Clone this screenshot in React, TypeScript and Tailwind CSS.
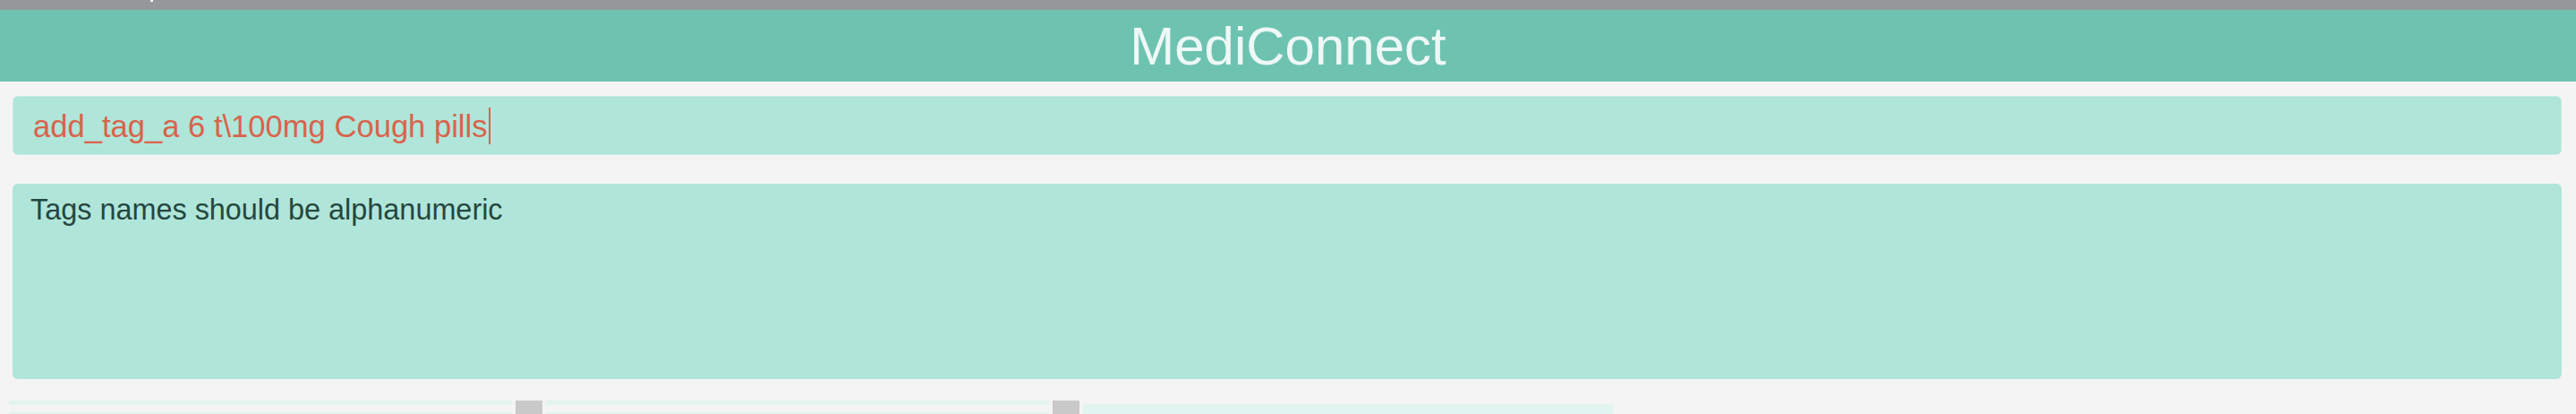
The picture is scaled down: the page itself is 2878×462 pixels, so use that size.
import React from "react";

export default function App() {
  return (
    <div
      className="w-[2878px] h-[462px] overflow-hidden bg-[#f4f4f4] flex flex-col"
      style={{ fontFamily: '"Liberation Sans", Arial, sans-serif' }}
    >
      <div className="h-[11px] bg-[#959898] shrink-0">
        <div className="ml-[168px] w-[3px] h-[2px] bg-white" />
      </div>
      <header className="h-[80px] shrink-0 bg-[#6ec3b0] flex items-center justify-center">
        <h1 className="text-[60px] leading-[69px] text-[#eef8f6] font-normal">MediConnect</h1>
      </header>

      <div className="ml-[14px] mr-[16px] mt-[16px] h-[66px] shrink-0 rounded-[6px] bg-[#b0e5d9] border border-[#c6ede4] flex items-center pl-[22px]">
        <span className="text-[34.6px] leading-[41px] mt-[2px] text-[#d9634c] whitespace-pre">add_tag_a 6 t\100mg Cough pills</span>
        <span className="w-[2px] h-[41px] bg-[#d9634c] ml-[1px]" />
      </div>

      <div className="ml-[14px] mr-[16px] mt-[32px] h-[218px] shrink-0 rounded-[6px] bg-[#b0e5d9] pl-[20px] pt-[11px]">
        <p className="text-[32.4px] leading-[37px] text-[#24473f]">Tags names should be alphanumeric</p>
      </div>

      <div className="mt-[24px] pl-[10px] flex items-start gap-[4px]">
        <div className="w-[562px] flex flex-col">
          <div className="h-[5px] bg-[#e2f4ef]" />
          <div className="h-[5px] mt-[8px] bg-[#e2f4ef]" />
        </div>
        <div className="w-[30px] h-[20px] bg-[#c9c9c9]" />
        <div className="w-[562px] flex flex-col">
          <div className="h-[5px] bg-[#e2f4ef]" />
          <div className="h-[5px] mt-[8px] bg-[#e2f4ef]" />
        </div>
        <div className="w-[30px] h-[20px] bg-[#c9c9c9]" />
        <div className="w-[592px] h-[20px] mt-[4px] bg-[#e2f4ef]" />
      </div>
    </div>
  );
}
